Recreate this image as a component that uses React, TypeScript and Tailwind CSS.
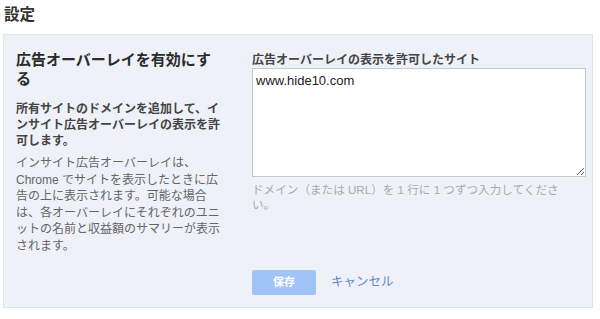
import React from 'react';

const font = { fontFamily: '"Liberation Sans", "Noto Sans CJK JP", sans-serif' };

export default function App() {
  return (
    <div className="w-[600px] h-[319px] bg-white overflow-hidden text-[#333]" style={font}>
      <h1 className="pl-[4px] pt-[5px] h-[34px] text-[15.5px] leading-[19px] font-bold text-[#333]">設定</h1>

      <div className="ml-[3px] w-[590px] bg-[#eef2f8] border border-[#dfe5ee] pt-[15px] pb-[12px] pl-[12px] pr-[5px]">
        <div className="flex">
          <div className="w-[206px] shrink-0">
            <h2 className="text-[15px] leading-[19px] font-bold text-[#2b2b2b]">
              広告オーバーレイを有効にす<br />る
            </h2>
            <p className="mt-[13px] text-[12px] leading-[16px] font-bold text-[#444]">
              所有サイトのドメインを追加して、イ<br />
              ンサイト広告オーバーレイの表示を許<br />
              可します。
            </p>
            <p className="mt-[6px] text-[12px] leading-[16.5px] text-[#666]">
              インサイト広告オーバーレイは、<br />
              Chrome でサイトを表示したときに広<br />
              告の上に表示されます。可能な場合<br />
              は、各オーバーレイにそれぞれのユニ<br />
              ットの名前と収益額のサマリーが表示<br />
              されます。
            </p>
          </div>

          <div className="ml-[30px] flex-1">
            <label className="block mt-[2px] text-[12px] leading-[16px] font-bold text-[#444]">
              広告オーバーレイの表示を許可したサイト
            </label>
            <textarea
              className="block w-[334px] h-[109px] bg-white border border-[#c8c8c8] px-[3px] py-[4px] text-[13px] leading-[16px] text-[#222] outline-none"
              style={font}
              defaultValue="www.hide10.com"
            />
            <p className="mt-[5px] text-[11.6px] leading-[15px] text-[#aaaaaa]">
              ドメイン（または URL）を 1 行に 1 つずつ入力してくださ<br />い。
            </p>
          </div>
        </div>

        <div className="flex items-center mt-[16px] ml-[236px] gap-[15px]">
          <button className="w-[64px] h-[25px] rounded-[2px] bg-[#a1c4f7] text-white text-[11px] font-bold">
            保存
          </button>
          <span className="text-[12.5px] text-[#5f87c9]">キャンセル</span>
        </div>
      </div>
    </div>
  );
}
